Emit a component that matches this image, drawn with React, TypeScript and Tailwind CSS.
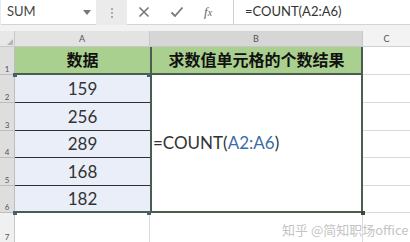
import React from "react";

const rows = ["159", "256", "289", "168", "182"];

export default function App() {
  const font = { fontFamily: '"Lato", "Noto Sans CJK SC", sans-serif' };
  return (
    <div className="relative w-[410px] h-[242px] overflow-hidden bg-white" style={font}>
      {/* formula bar */}
      <div className="flex h-[25px] bg-[#ebebeb]">
        <div className="ml-[1px] w-[95px] bg-white flex items-center justify-between pl-[6px] pr-[5px] border-b border-[#d4d4d4]">
          <span className="text-[13px] text-[#444]">SUM</span>
          <svg width="8" height="5" viewBox="0 0 8 5"><path d="M0 0 L8 0 L4 5 Z" fill="#777" /></svg>
        </div>
        <div className="w-[31px] flex items-center justify-center">
          <div className="flex flex-col gap-[2px]">
            <div className="w-[2px] h-[2px] bg-[#aaa]" />
            <div className="w-[2px] h-[2px] bg-[#aaa]" />
            <div className="w-[2px] h-[2px] bg-[#aaa]" />
          </div>
        </div>
        <div className="flex-1 bg-white flex border-b border-[#d4d4d4]">
          <div className="w-[106px] flex items-center">
            <svg className="ml-[11px]" width="12" height="12" viewBox="0 0 12 12"><path d="M1.5 1.5 L10.5 10.5 M10.5 1.5 L1.5 10.5" stroke="#777" strokeWidth="1.6" /></svg>
            <svg className="ml-[20px]" width="14" height="12" viewBox="0 0 14 12"><path d="M1.5 6.5 L5 10 L12.5 1.5" stroke="#777" strokeWidth="1.8" fill="none" /></svg>
            <span className="ml-[20px] text-[13px] italic text-[#666]" style={{ fontFamily: '"Liberation Serif", serif' }}>f<span className="text-[10px]">x</span></span>
          </div>
          <div className="flex-1 border-l border-[#d0d0d0] flex items-center pl-[11px] text-[13px] text-[#333]">=COUNT(A2:A6)</div>
        </div>
      </div>
      <div className="h-[6px] bg-[#f2f2f2]" />
      {/* grid */}
      <div className="grid grid-cols-[15px_135px_213px_47px] grid-rows-[16px_28px_28px_28px_27px_28px_27px_29px]">
        {/* column headers */}
        <div className="bg-[#e8e8e8] border-r border-b border-[#c8c8c8] flex items-end justify-end p-[1px]">
          <svg width="6" height="6" viewBox="0 0 6 6"><path d="M6 0 L6 6 L0 6 Z" fill="#b5b5b5" /></svg>
        </div>
        <div className="bg-[#e3e3e3] border-r border-b border-[#c8c8c8] flex items-center justify-center text-[9px] text-[#555]">A</div>
        <div className="bg-[#d6d6d6] border-r border-b border-[#c8c8c8] flex items-center justify-center text-[9px] text-[#555]">B</div>
        <div className="bg-[#f3f3f3] border-b border-[#d0d0d0] flex items-center justify-center text-[9px] text-[#555]">C</div>

        {/* row 1 */}
        <div className="bg-[#dedede] border-r border-b border-[#bdbdbd] flex items-end justify-center text-[8px] text-[#555] leading-[10px]">1</div>
        <div className="bg-[#a9d08e] border-b-2 border-[#4a5e4d] flex items-center justify-center text-[16px] font-bold text-[#111]">数据</div>
        <div className="bg-[#a9d08e] border-x-2 border-b-2 border-[#4a5e4d] flex items-center justify-center text-[16px] font-bold text-[#111]">求数值单元格的个数结果</div>
        <div className="border-b border-[#dadada]" />

        {/* rows 2-6 */}
        {rows.map((v, i) => (
          <React.Fragment key={v}>
            <div
              className="bg-[#dedede] border-r border-b border-[#bdbdbd] flex items-end justify-center text-[8px] text-[#555] leading-[10px]"
              style={{ gridColumn: 1, gridRow: i + 3 }}
            >
              {i + 2}
            </div>
            <div
              className={`bg-[#e9eef8] flex items-center justify-center text-[17px] text-[#333] ${i < 4 ? "border-b border-[#2f2f2f]" : "border-b-2 border-[#4a5e4d]"}`}
              style={{ gridColumn: 2, gridRow: i + 3 }}
            >
              {v}
            </div>
            <div className="border-b border-[#dadada]" style={{ gridColumn: 4, gridRow: i + 3 }} />
          </React.Fragment>
        ))}
        <div
          className="bg-white border-x-2 border-b-2 border-[#4a5e4d] flex items-center text-[17px] text-[#333] pl-[1px]"
          style={{ gridColumn: 3, gridRow: "3 / span 5" }}
        >
          =COUNT(<span className="text-[#3d6ba8]">A2:A6</span>)
        </div>

        {/* row 7 */}
        <div className="bg-[#f0f0f0] border-r border-[#c8c8c8] flex items-end justify-center text-[8px] text-[#555] leading-[10px]">7</div>
        <div className="border-r border-[#dadada]" />
        <div className="border-r border-[#dadada]" />
        <div />
      </div>

      {/* corner handles */}
      <div className="absolute left-[13px] top-[73px] w-[4px] h-[4px] bg-[#4a5e6d]" />
      <div className="absolute left-[147px] top-[73px] w-[4px] h-[4px] bg-[#4a5e6d]" />
      <div className="absolute left-[13px] top-[211px] w-[4px] h-[4px] bg-[#4a5e6d]" />
      <div className="absolute left-[147px] top-[211px] w-[4px] h-[4px] bg-[#4a5e6d]" />
      <div className="absolute left-[361px] top-[211px] w-[4px] h-[4px] bg-[#3a4a3d]" />

      {/* watermark */}
      <div className="absolute left-[282px] top-[220px] text-[13px] text-[#c4c4c4] whitespace-nowrap" style={{ fontFamily: '"Noto Sans CJK SC", sans-serif' }}>
        知乎 @简知职场office
      </div>
    </div>
  );
}
